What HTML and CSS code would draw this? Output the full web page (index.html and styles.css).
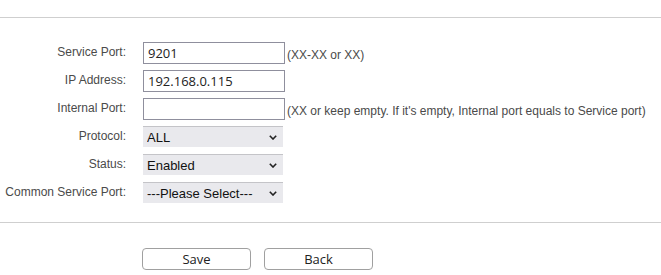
FILE: index.html
```html
<!DOCTYPE html>
<html lang="en">
<head>
  <meta charset="UTF-8" />
  <title>Virtual Server</title>
  <link rel="stylesheet" href="styles.css">
</head>
<body>
  <div class="page">
    <hr class="divider top" />

    <div class="form">
      <label class="label" for="svcPort">Service Port:</label>
      <div class="field">
        <input class="text" type="text" id="svcPort" value="9201" />
        <span class="hint">(XX-XX or XX)</span>
      </div>

      <label class="label" for="ip">IP Address:</label>
      <div class="field">
        <input class="text" type="text" id="ip" value="192.168.0.115" />
      </div>

      <label class="label" for="inPort">Internal Port:</label>
      <div class="field">
        <input class="text" type="text" id="inPort" value="" />
        <span class="hint">(XX or keep empty. If it's empty, Internal port equals to Service port)</span>
      </div>

      <label class="label" for="proto">Protocol:</label>
      <div class="field">
        <div class="pick-wrap">
          <select class="pick" id="proto">
            <option>ALL</option>
            <option>TCP</option>
            <option>UDP</option>
          </select>
          <svg class="chev" width="8" height="5" viewBox="0 0 8 5"><path d="M0.8 0.8 L4 4 L7.2 0.8" fill="none" stroke="#222" stroke-width="1.6"/></svg>
        </div>
      </div>

      <label class="label" for="status">Status:</label>
      <div class="field">
        <div class="pick-wrap">
          <select class="pick" id="status">
            <option>Enabled</option>
            <option>Disabled</option>
          </select>
          <svg class="chev" width="8" height="5" viewBox="0 0 8 5"><path d="M0.8 0.8 L4 4 L7.2 0.8" fill="none" stroke="#222" stroke-width="1.6"/></svg>
        </div>
      </div>

      <label class="label" for="common">Common Service Port:</label>
      <div class="field">
        <div class="pick-wrap">
          <select class="pick" id="common">
            <option>---Please Select---</option>
            <option>DNS</option>
            <option>FTP</option>
            <option>HTTP</option>
          </select>
          <svg class="chev" width="8" height="5" viewBox="0 0 8 5"><path d="M0.8 0.8 L4 4 L7.2 0.8" fill="none" stroke="#222" stroke-width="1.6"/></svg>
        </div>
      </div>
    </div>

    <hr class="divider bottom" />

    <div class="actions">
      <button class="btn">Save</button>
      <button class="btn">Back</button>
    </div>
  </div>
</body>
</html>
```

FILE: styles.css
```css
body {
  margin: 0;
  background: #ffffff;
  font-family: "Liberation Sans", Arial, sans-serif;
  font-size: 12px;
  color: #4a4a4a;
}
.page {
  padding-top: 17px;
}
.divider {
  margin: 0;
  border: none;
  border-top: 1px solid #cfcfcf;
}
.form {
  display: grid;
  grid-template-columns: 126px 1fr;
  column-gap: 17px;
  row-gap: 6px;
  padding-top: 24px;
  padding-bottom: 18px;
}
.label {
  text-align: right;
  padding-top: 3px;
  line-height: 14px;
  white-space: nowrap;
}
.field {
  display: flex;
  align-items: flex-start;
  height: 22px;
}
.text {
  box-sizing: border-box;
  width: 142px;
  height: 22px;
  margin: 0;
  padding: 0 4px;
  border: 1px solid #8f8f9d;
  border-radius: 0;
  font-family: "Open Sans", sans-serif;
  font-size: 13px;
  color: #222;
}
.hint {
  padding-left: 2px;
  padding-top: 6px;
  line-height: 14px;
  white-space: nowrap;
}
.pick-wrap {
  position: relative;
  width: 140px;
  height: 21px;
}
.pick {
  -webkit-appearance: none;
  appearance: none;
  box-sizing: border-box;
  width: 140px;
  height: 21px;
  margin: 0;
  padding: 0 16px 0 4px;
  border: none;
  border-top: 1px solid #c4c4c8;
  border-radius: 0;
  background-color: #e9e9ed;
  font-family: "Liberation Sans", Arial, sans-serif;
  font-size: 13px;
  color: #111;
}
.chev {
  position: absolute;
  right: 6px;
  top: 9px;
  pointer-events: none;
}
.actions {
  display: flex;
  gap: 13px;
  padding: 25px 0 0 142px;
}
.btn {
  box-sizing: border-box;
  width: 109px;
  height: 22px;
  margin: 0;
  padding: 0;
  border: 1px solid #a0a0a0;
  border-radius: 4px;
  background: #ffffff;
  font-family: "Open Sans", sans-serif;
  font-size: 13px;
  color: #222;
}
```
